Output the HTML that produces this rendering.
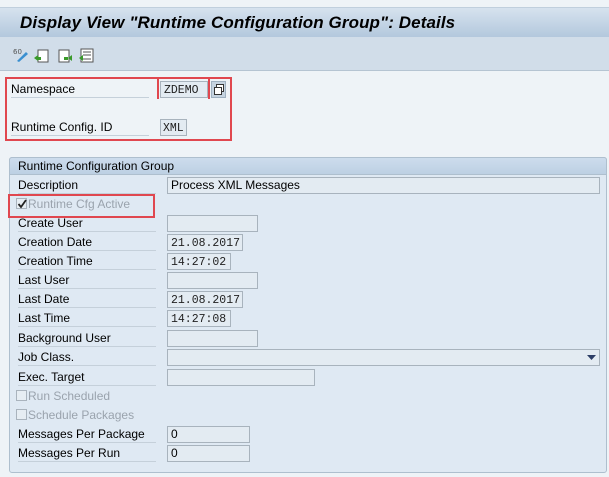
<!DOCTYPE html><html><head><style>
*{margin:0;padding:0;box-sizing:border-box}
body{width:609px;height:477px;background:#eef3f7;font-family:"Liberation Sans",sans-serif;font-size:12px;color:#000;position:relative;overflow:hidden}
.a{position:absolute}
.title{left:0;top:7px;width:609px;height:30px;background:linear-gradient(#d6e2ee,#b3c8dd);border-top:1px solid #c0cfdd}
.title span{position:absolute;left:20px;top:5px;font:italic bold 17px "Liberation Sans",sans-serif;color:#000;letter-spacing:0.1px}
.tb{left:0;top:37px;width:609px;height:34px;background:#d1dde9;border-bottom:1px solid #b5c4d2}
.lbl{position:absolute;left:18px;width:138px;height:17px;line-height:16px;border-bottom:1px solid #c5d0da;font-size:12px}
.f{position:absolute;left:167px;height:17px;border:1px solid #a8b3bd;background:#e3ebf2;font-family:"Liberation Mono",monospace;font-size:11.5px;line-height:17px;padding-left:3px;color:#222}
.fs{font-family:"Liberation Sans",sans-serif;font-size:12px;line-height:15px;color:#000}
.red{position:absolute;border:2px solid #e0474f}
.dis{color:#9aa3ad}
.cb{display:inline-block;width:11px;height:11px;border:1px solid #a9b3bd;background:#e6edf3;vertical-align:-1px;margin-right:1px;position:relative}
</style></head><body>
<div class="a title"><span>Display View "Runtime Configuration Group": Details</span></div>
<div class="a tb">
<svg class="a" style="left:13px;top:10px" width="90" height="16">
<text x="0" y="7" font-size="7" fill="#555" font-family="DejaVu Sans">60</text>
<path d="M4 14 L13 5 L15 7 L6 15 Z" fill="#3a8fd0"/>
<rect x="25" y="3" width="10" height="12" fill="#fff" stroke="#555"/><path d="M21 11 l4 -3 v6 z" fill="#3a9a2a"/><rect x="24" y="10" width="4" height="3" fill="#3a9a2a"/>
<rect x="46" y="3" width="10" height="12" fill="#fff" stroke="#555"/><path d="M55 11 l4 -3 v6 z" fill="#3a9a2a"/><rect x="51" y="10" width="4" height="3" fill="#3a9a2a"/>
<rect x="68" y="2" width="12" height="13" fill="#fff" stroke="#555"/><path d="M70 5h8M70 8h8M70 12h8" stroke="#555"/><path d="M66 11 l4 -3 v6 z" fill="#3a9a2a"/>
</svg></div>
<div class="lbl" style="top:81px;left:11px">Namespace</div>
<div class="f" style="left:160px;top:81px;width:48px">ZDEMO</div>
<div class="a" style="left:211px;top:81px;width:15px;height:17px;background:#c5d3e0;border:1px solid #9fb0c0"><div class="a" style="left:4px;top:2px;width:8px;height:8px;border:1px solid #333;background:#fff"></div><div class="a" style="left:2px;top:5px;width:8px;height:8px;border:1px solid #333;background:#fff"></div></div>
<div class="lbl" style="top:119px;left:11px">Runtime Config. ID</div>
<div class="f" style="left:160px;top:119px;width:27px;padding-left:2px">XML</div>
<div class="red" style="left:5px;top:77px;width:227px;height:64px"></div>
<div class="red" style="left:157px;top:79px;width:53px;height:20px;border-top:0;border-bottom:0"></div>
<div class="a" style="left:9px;top:157px;width:598px;height:316px;background:#dfe9f3;border:1px solid #aebfce;border-radius:3px"></div>
<div class="a" style="left:9px;top:157px;width:598px;height:18px;background:linear-gradient(#cddced,#bdd0e3);border:1px solid #aebfce;border-radius:3px 3px 0 0;padding-left:8px;line-height:16px;font-size:12px">Runtime Configuration Group</div>
<div class="lbl" style="top:177px">Description</div><div class="f fs" style="top:177px;width:433px">Process XML Messages</div>
<div class="lbl dis" style="top:196px;border:0;left:16px"><span class="cb"><svg class="a" style="left:0;top:0" width="10" height="10"><path d="M1.5 5 L4 8 L9 1" stroke="#222" stroke-width="1.8" fill="none"/></svg></span>Runtime Cfg Active</div>
<div class="red" style="left:8px;top:194px;width:147px;height:24px"></div>
<div class="lbl" style="top:215px">Create User</div><div class="f" style="top:215px;width:91px"></div>
<div class="lbl" style="top:234px">Creation Date</div><div class="f" style="top:234px;width:76px">21.08.2017</div>
<div class="lbl" style="top:253px">Creation Time</div><div class="f" style="top:253px;width:64px">14:27:02</div>
<div class="lbl" style="top:272px">Last User</div><div class="f" style="top:272px;width:91px"></div>
<div class="lbl" style="top:291px">Last Date</div><div class="f" style="top:291px;width:76px">21.08.2017</div>
<div class="lbl" style="top:310px">Last Time</div><div class="f" style="top:310px;width:64px">14:27:08</div>
<div class="lbl" style="top:330px">Background User</div><div class="f" style="top:330px;width:91px"></div>
<div class="lbl" style="top:349px">Job Class.</div><div class="f" style="top:349px;width:433px"><svg class="a" style="right:3px;top:5px" width="9" height="5"><path d="M0 0h9L4.5 5z" fill="#2c3e66"/></svg></div>
<div class="lbl" style="top:369px">Exec. Target</div><div class="f" style="top:369px;width:148px"></div>
<div class="lbl dis" style="top:388px;border:0;left:16px"><span class="cb"></span>Run Scheduled</div>
<div class="lbl dis" style="top:407px;border:0;left:16px"><span class="cb"></span>Schedule Packages</div>
<div class="lbl" style="top:426px">Messages Per Package</div><div class="f fs" style="top:426px;width:83px">0</div>
<div class="lbl" style="top:445px">Messages Per Run</div><div class="f fs" style="top:445px;width:83px">0</div>
</body></html>
